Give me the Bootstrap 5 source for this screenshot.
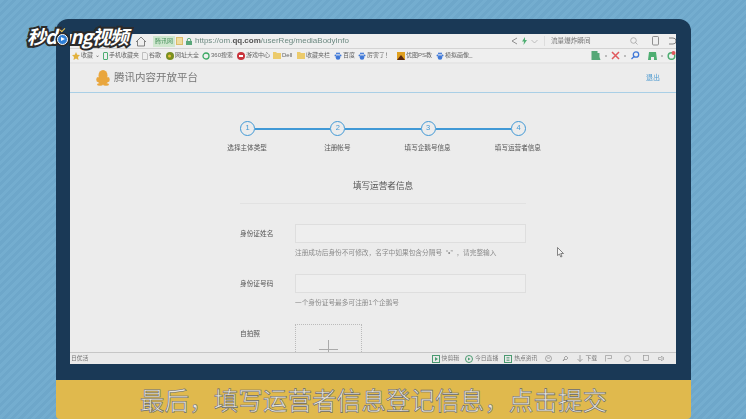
<!DOCTYPE html>
<html lang="zh">
<head>
<meta charset="UTF-8">
<title>腾讯内容开放平台</title>
<link href="https://cdn.jsdelivr.net/npm/bootstrap@5.3.0/dist/css/bootstrap.min.css" rel="stylesheet">
<style>
html, body { height: 419px; overflow: hidden; }
body {
  font-family: "Liberation Sans", "Noto Sans CJK SC", sans-serif;
  background: repeating-linear-gradient(135deg, #74adcf 0 3px, #6ea7ca 3px 6px);
  color: #666;
}
.stage { position: relative; width: 746px; height: 419px; padding: 19px 55px 0 56px; }
.monitor { background: #1a3956; border-radius: 12px 12px 0 0; height: 361px; padding: 15px 15px 16px 14px; }
.screen { height: 330px; background: #ececec; filter: blur(.5px); overflow: hidden; font-size: 7px; }
.addr-bar { height: 15px; background: #efefef; border-bottom: 1px solid #d4d4d4; padding-left: 65px; font-size: 8px; color: #6d8a82; white-space: nowrap; }
.tag-site { background: #cfe7cf; color: #4d9560; font-size: 6px; padding: 1px 2px; margin: 0 1px 0 6px; line-height: 9px; }
.tag-note { width: 7px; height: 8px; background: #efdc9f; border: 1px solid #dcbc68; margin-right: 3px; }
.url-host { color: #555; font-weight: 700; }
.lock-icon { margin-right: 3px; }
.addr-search { width: 86px; color: #777; font-size: 6.6px; padding-left: 6px; border-left: 1px solid #ddd; margin-left: 6px; }
.tablet-icon { margin: 0 9px 0 14px; }
.fav-bar { height: 15px; background: #efefef; border-bottom: 2px solid #e6e6e6; padding-left: 2px; font-size: 6px; color: #666; white-space: nowrap; }
.fav-item { gap: 1px; }
.fav-w24 { width: 24px; }
.fav-w31 { width: 31px; }
.fav-w35 { width: 35px; }
.fav-w36 { width: 36px; }
.fav-w37 { width: 37px; }
.fav-w39 { width: 39px; }
.page-head { height: 29px; border-bottom: 1px solid #a9cfe6; padding: 0 16px 0 26px; }
.brand-text { font-size: 10.5px; color: #777; margin-left: 4px; }
.quit-link { color: #4f9bd0; font-size: 7px; text-decoration: none; }
.page-body { height: 259px; overflow: hidden; position: relative; padding-top: 28px; }
.step-line { width: 286px; margin-left: 170px; }
.step-dot { width: 15px; height: 15px; flex: none; border: 1.5px solid #4199d6; border-radius: 50%; color: #4199d6; font-size: 7.5px; line-height: 12px; text-align: center; }
.step-link { flex: 1; height: 2px; background: #4199d6; }
.step-names { width: 361px; margin: 7px 0 0 132px; }
.step-name { width: 91px; text-align: center; color: #555; font-size: 6.6px; white-space: nowrap; }
.form-head { width: 286px; margin: 27px 0 0 170px; padding-bottom: 11px; border-bottom: 1px solid #e2e2e2; text-align: center; font-size: 8.6px; color: #555; line-height: 12px; }
.form-line { margin: 20px 0 0 170px; }
.form-name { width: 55px; color: #555; font-size: 6.7px; line-height: 19px; flex: none; }
.form-box { width: 231px; height: 19px; background: #eeeeee; border: 1px solid #dedede; }
.form-tip { font-size: 6.7px; color: #8b8b8b; line-height: 10px; margin-top: 5px; white-space: nowrap; }
.form-line + .form-line { margin-top: 16px; }
.photo-box { width: 67px; height: 50px; border: 1px dotted #bbb; position: relative; }
.photo-box::before { content: ""; position: absolute; left: 23px; top: 24px; width: 19px; height: 1px; background: #aaa; }
.photo-box::after { content: ""; position: absolute; left: 32px; top: 15px; width: 1px; height: 19px; background: #aaa; }
.cursor-mark { position: absolute; left: 487px; top: 154px; }
.status-bar { height: 12px; background: #eaeaea; border-top: 1px solid #c6c6c6; padding: 0 11px 0 1px; font-size: 5.8px; color: #777; white-space: nowrap; }
.status-item { gap: 2px; }
.gap-a { margin-right: 6px; }
.gap-b { margin-right: 8px; }
.gap-c { margin-right: 10px; }
.gap-d { margin-right: 12px; }
.caption-band { height: 39px; background: #e0b94d; border-radius: 0 0 4px 4px; text-align: center; }
.caption-text { font-family: "Noto Sans CJK SC", sans-serif; font-size: 24.6px; line-height: 39px; color: #e6e4de; -webkit-text-stroke: .6px #666; white-space: nowrap; }
.site-logo { position: absolute; left: 27px; top: 22px; font-family: "Noto Sans CJK SC", sans-serif; font-weight: 700; font-style: italic; font-size: 19px; line-height: 28px; color: #fff; -webkit-text-stroke: 4px #2b2b2b; paint-order: stroke fill; white-space: nowrap; letter-spacing: -1px; }
.logo-o { display: inline-block; width: 11px; height: 11px; border-radius: 50%; background: #2f7fd6; border: 1.5px solid #fff; box-shadow: 0 0 0 1.5px #2b2b2b; vertical-align: -1px; margin: 0 2px 0 1px; position: relative; z-index: 1; }
.logo-o::after { content: ""; position: absolute; left: 2.5px; top: 1.5px; border-left: 4px solid #fff; border-top: 2.5px solid transparent; border-bottom: 2.5px solid transparent; }
.logo-o::before { content: ""; position: absolute; left: 2px; top: -7px; width: 5px; height: 3px; border-left: 1.5px solid #f2c94c; border-bottom: 1.5px solid #f2c94c; transform: rotate(-45deg); }
</style>
</head>
<body>
<div class="stage">
  <div class="monitor">
    <div class="screen">
      <!-- address bar -->
      <div class="addr-bar d-flex align-items-center">
        <svg width="12" height="11" viewBox="0 0 12 11" fill="none" stroke="#666" stroke-width=".8"><path d="M1 6 6 1l5 5M2.500 5v5h7V5"/></svg>
        <span class="tag-site">腾讯网</span><span class="tag-note"></span>
        <svg width="6" height="7" viewBox="0 0 6 7" class="lock-icon"><rect y="3" width="6" height="4" fill="#5aa77a"/><path d="M1.300 3V2a1.700 1.700 0 0 1 3.400 0v1" fill="none" stroke="#5aa77a"/></svg>
        <span>https://om.<span class="url-host">qq.com</span>/userReg/mediaBodyInfo</span>
        <div class="d-flex align-items-center ms-auto">
          <svg width="7" height="8" viewBox="0 0 7 8" fill="none" stroke="#777" stroke-width=".8" class="me-1"><path d="M6 1 1 4l5 3"/></svg>
          <svg width="5" height="8" viewBox="0 0 5 8" fill="#4fae72"><path d="M3 0 0 4.500h2L1.500 8 5 3H3z"/></svg>
          <svg width="7" height="5" viewBox="0 0 7 5" fill="none" stroke="#aaa" stroke-width=".7" class="ms-1"><path d="m.5 1 3 3 3-3"/></svg>
          <span class="addr-search">流量爆炸瞬间</span>
          <svg width="8" height="8" viewBox="0 0 8 8" fill="none" stroke="#999" stroke-width=".7"><circle cx="3.500" cy="3.500" r="2.800"/><path d="m5.500 5.500 2 2"/></svg>
          <svg class="tablet-icon" width="7" height="10" viewBox="0 0 7 10" fill="none" stroke="#777" stroke-width=".8"><rect x=".5" y=".5" width="6" height="8.500" rx="1"/></svg>
          <svg width="8" height="9" viewBox="0 0 8 9" fill="none" stroke="#666" stroke-width=".8"><path d="M1 1h4a2.500 2.500 0 0 1 0 6H1"/></svg>
        </div>
      </div>
      <!-- favourites bar -->
      <div class="fav-bar d-flex align-items-center">
        <div class="fav-item d-flex align-items-center fav-w31"><svg width="8" height="8" viewBox="0 0 8 8" fill="#e2b13c"><path d="m4 0 1.200 2.700L8 3 6 5l.5 3L4 6.500 1.500 8 2 5 0 3l2.800-.3z"/></svg>收藏 ⌄</div>
        <div class="fav-item d-flex align-items-center fav-w39"><svg width="5" height="8" viewBox="0 0 5 8" fill="none" stroke="#4fae72"><rect x=".5" y=".5" width="4" height="7" rx=".5"/></svg>手机收藏夹</div>
        <div class="fav-item d-flex align-items-center fav-w24"><svg width="6" height="8" viewBox="0 0 6 8" fill="none" stroke="#aaa" stroke-width=".7"><path d="M.5.500h3.500L5.500 2v5.500h-5z"/></svg> 谷歌</div>
        <div class="fav-item d-flex align-items-center fav-w36"><svg width="8" height="8" viewBox="0 0 8 8"><circle cx="4" cy="4" r="4" fill="#7a8f20"/><circle cx="3.500" cy="4" r="1.500" fill="#e8c13c"/></svg>网址大全</div>
        <div class="fav-item d-flex align-items-center fav-w35"><svg width="8" height="8" viewBox="0 0 8 8" fill="none" stroke="#3aa862" stroke-width="1.300"><circle cx="4" cy="4" r="3"/></svg>360搜索</div>
        <div class="fav-item d-flex align-items-center fav-w36"><svg width="8" height="8" viewBox="0 0 8 8"><circle cx="4" cy="4" r="4" fill="#c9343c"/><rect x="2" y="3" width="4" height="2" fill="#fff"/></svg>游戏中心</div>
        <div class="fav-item d-flex align-items-center fav-w24"><svg width="8" height="7" viewBox="0 0 8 7" fill="#eccb6c"><path d="M0 0h3l1 1h4v6H0z"/></svg>Dell</div>
        <div class="fav-item d-flex align-items-center fav-w37"><svg width="8" height="7" viewBox="0 0 8 7" fill="#eccb6c"><path d="M0 0h3l1 1h4v6H0z"/></svg>收藏夹栏</div>
        <div class="fav-item d-flex align-items-center fav-w24"><svg width="8" height="8" viewBox="0 0 8 8" fill="#3f78d8"><circle cx="4" cy="5.500" r="2.300"/><circle cx="1.500" cy="3.500" r="1"/><circle cx="6.500" cy="3.500" r="1"/><circle cx="3" cy="1.500" r="1"/><circle cx="5" cy="1.500" r="1"/></svg>百度</div>
        <div class="fav-item d-flex align-items-center fav-w39"><svg width="8" height="8" viewBox="0 0 8 8" fill="#3f78d8"><circle cx="4" cy="5.500" r="2.300"/><circle cx="1.500" cy="3.500" r="1"/><circle cx="6.500" cy="3.500" r="1"/><circle cx="3" cy="1.500" r="1"/><circle cx="5" cy="1.500" r="1"/></svg>厉害了！</div>
        <div class="fav-item d-flex align-items-center fav-w39"><svg width="8" height="8" viewBox="0 0 8 8"><rect width="8" height="8" fill="#e0a020"/><path d="M0 8 4 3l4 5z" fill="#5a2a10"/></svg>优图PS教</div>
        <div class="fav-item d-flex align-items-center"><svg width="8" height="8" viewBox="0 0 8 8" fill="#3f78d8"><circle cx="4" cy="5.500" r="2.300"/><circle cx="1.500" cy="3.500" r="1"/><circle cx="6.500" cy="3.500" r="1"/><circle cx="3" cy="1.500" r="1"/><circle cx="5" cy="1.500" r="1"/></svg>模拟画像_</div>
        <div class="d-flex align-items-center ms-auto">
          <svg width="10" height="9" viewBox="0 0 9 9" fill="#56a877"><path d="M0 0h6v2h2v4l1 3H0z"/></svg>
          <svg width="2" height="2" class="mx-1"><rect width="2" height="2" fill="#bbb"/></svg>
          <svg width="9" height="9" viewBox="0 0 9 9" stroke="#e0585c" stroke-width="1.500"><path d="m1 1 7 7M8 1 1 8"/></svg>
          <svg width="2" height="2" class="mx-1"><rect width="2" height="2" fill="#bbb"/></svg>
          <svg width="10" height="9" viewBox="0 0 9 9" fill="none" stroke="#3f78d8" stroke-width="1.300" class="me-2"><circle cx="5.500" cy="3.500" r="2.700"/><path d="M3.500 5.500 1 8"/></svg>
          <svg width="9" height="8" viewBox="0 0 9 8" fill="#4fae72"><path d="M1 0h7l1 8H6V5H3v3H0z"/></svg>
          <svg width="2" height="2" class="mx-1"><rect width="2" height="2" fill="#bbb"/></svg>
          <svg width="9" height="9" viewBox="0 0 8 9"><circle cx="4" cy="5" r="3.300" fill="none" stroke="#4fae72" stroke-width="1.500"/><circle cx="6" cy="2" r="2" fill="#e0585c"/></svg>
        </div>
      </div>
      <!-- page header -->
      <div class="page-head d-flex align-items-center">
        <svg width="14" height="16" viewBox="0 0 14 16" fill="#e9a63d"><ellipse cx="7" cy="5.500" rx="4.500" ry="5.500"/><ellipse cx="7" cy="10" rx="5.500" ry="4.500"/><ellipse cx="1.800" cy="9.500" rx="1.500" ry="2.500"/><ellipse cx="12.200" cy="9.500" rx="1.500" ry="2.500"/><ellipse cx="4" cy="14.500" rx="3" ry="1.300"/><ellipse cx="10" cy="14.500" rx="3" ry="1.300"/></svg>
        <span class="brand-text">腾讯内容开放平台</span>
        <a class="quit-link ms-auto" href="#">退出</a>
      </div>
      <!-- page body -->
      <div class="page-body">
        <div class="step-line d-flex align-items-center">
          <div class="step-dot">1</div><div class="step-link"></div>
          <div class="step-dot">2</div><div class="step-link"></div>
          <div class="step-dot">3</div><div class="step-link"></div>
          <div class="step-dot">4</div>
        </div>
        <div class="step-names d-flex">
          <div class="step-name">选择主体类型</div>
          <div class="step-name">注册帐号</div>
          <div class="step-name">填写企鹅号信息</div>
          <div class="step-name">填写运营者信息</div>
        </div>
        <div class="form-head">填写运营者信息</div>
        <div class="form-line d-flex">
          <div class="form-name">身份证姓名</div>
          <div>
            <div class="form-box"></div>
            <div class="form-tip">注册成功后身份不可修改，名字中如果包含分隔号&nbsp;&nbsp;“•”&nbsp;&nbsp;，请完整输入</div>
          </div>
        </div>
        <div class="form-line d-flex">
          <div class="form-name">身份证号码</div>
          <div>
            <div class="form-box"></div>
            <div class="form-tip">一个身份证号最多可注册1个企鹅号</div>
          </div>
        </div>
        <div class="form-line d-flex">
          <div class="form-name">自拍照</div>
          <div class="photo-box"></div>
        </div>
        <svg class="cursor-mark" width="7" height="11" viewBox="0 0 7 11" fill="#f4f4f4" stroke="#555" stroke-width=".7"><path d="M.5.500v8l2-1.500 1.300 3 1.200-.5L3.800 6.500H6.500z"/></svg>
      </div>
      <!-- status bar -->
      <div class="status-bar d-flex align-items-center">
        <span>日优活</span>
        <div class="d-flex align-items-center ms-auto">
          <div class="status-item d-flex align-items-center gap-a"><svg width="8" height="8" viewBox="0 0 8 8" fill="none" stroke="#4a9a70"><rect x=".5" y=".5" width="7" height="7"/><path d="m3 2 3 2-3 2z" fill="#4a9a70" stroke="none"/></svg>快剪辑</div>
          <div class="status-item d-flex align-items-center gap-a"><svg width="8" height="8" viewBox="0 0 8 8" fill="none" stroke="#4a9a70"><circle cx="4" cy="4" r="3.500"/><path d="m3 2.500 2.500 1.500L3 5.500z" fill="#4a9a70" stroke="none"/></svg>今日直播</div>
          <div class="status-item d-flex align-items-center gap-b"><svg width="8" height="8" viewBox="0 0 8 8" fill="none" stroke="#4a9a70"><rect x=".5" y=".5" width="7" height="7"/><path d="M2.500 2.500h3M2.500 5.500h3M2.500 4h3" stroke-width=".7"/></svg>热点资讯</div>
          <svg width="7" height="7" viewBox="0 0 7 7" fill="none" stroke="#888" stroke-width=".7" class="gap-c"><circle cx="3.500" cy="3.500" r="3"/><path d="M2 3h3"/></svg>
          <svg width="7" height="7" viewBox="0 0 7 7" fill="none" stroke="#888" stroke-width=".7" class="gap-b"><path d="m4 1 2 2-2 2-1-1-2 2 1.500-2.500L2 3z"/></svg>
          <div class="status-item d-flex align-items-center gap-b"><svg width="6" height="7" viewBox="0 0 6 7" fill="none" stroke="#888" stroke-width=".7"><path d="M3 0v6.500M.5 4 3 6.500 5.500 4"/></svg>下载</div>
          <svg width="7" height="7" viewBox="0 0 7 7" fill="none" stroke="#999" stroke-width=".7" class="gap-d"><path d="M.5 6.500v-6h6v3h-4"/></svg>
          <svg width="7" height="7" viewBox="0 0 7 7" fill="none" stroke="#999" stroke-width=".7" class="gap-d"><circle cx="3.500" cy="3.500" r="3"/></svg>
          <svg width="7" height="7" viewBox="0 0 7 7" fill="none" stroke="#999" stroke-width=".7" class="gap-b"><rect x=".5" y=".5" width="5" height="5"/></svg>
          <svg width="7" height="7" viewBox="0 0 7 7" fill="none" stroke="#999" stroke-width=".7"><path d="M.5 2.500h2L4 1v5L2.500 4.500h-2zM5.500 2v3"/></svg>
        </div>
      </div>
    </div>
  </div>
  <div class="caption-band"><span class="caption-text">最后，填写运营者信息登记信息，点击提交</span></div>
  <div class="site-logo">秒d<span class="logo-o"></span>ng视频</div>
</div>
<script src="https://cdn.jsdelivr.net/npm/bootstrap@5.3.0/dist/js/bootstrap.bundle.min.js"></script>
</body>
</html>
